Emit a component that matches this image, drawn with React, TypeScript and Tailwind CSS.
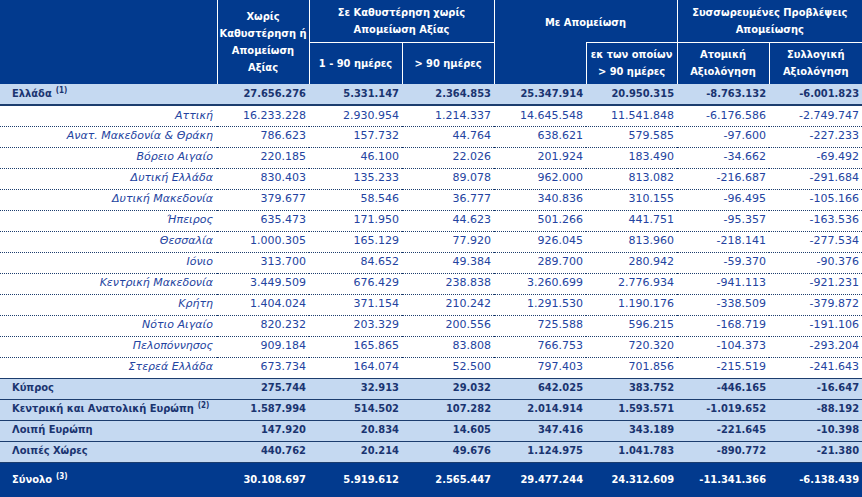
import React from 'react';

type Row = { label: string; sup?: string; values: string[]; kind: 'main' | 'region' };

const rows: Row[] = [
  { label: 'Ελλάδα', sup: '(1)', kind: 'main', values: ['27.656.276', '5.331.147', '2.364.853', '25.347.914', '20.950.315', '-8.763.132', '-6.001.823'] },
  { label: 'Αττική', kind: 'region', values: ['16.233.228', '2.930.954', '1.214.337', '14.645.548', '11.541.848', '-6.176.586', '-2.749.747'] },
  { label: 'Ανατ. Μακεδονία & Θράκη', kind: 'region', values: ['786.623', '157.732', '44.764', '638.621', '579.585', '-97.600', '-227.233'] },
  { label: 'Βόρειο Αιγαίο', kind: 'region', values: ['220.185', '46.100', '22.026', '201.924', '183.490', '-34.662', '-69.492'] },
  { label: 'Δυτική Ελλάδα', kind: 'region', values: ['830.403', '135.233', '89.078', '962.000', '813.082', '-216.687', '-291.684'] },
  { label: 'Δυτική Μακεδονία', kind: 'region', values: ['379.677', '58.546', '36.777', '340.836', '310.155', '-96.495', '-105.166'] },
  { label: 'Ήπειρος', kind: 'region', values: ['635.473', '171.950', '44.623', '501.266', '441.751', '-95.357', '-163.536'] },
  { label: 'Θεσσαλία', kind: 'region', values: ['1.000.305', '165.129', '77.920', '926.045', '813.960', '-218.141', '-277.534'] },
  { label: 'Ιόνιο', kind: 'region', values: ['313.700', '84.652', '49.384', '289.700', '280.942', '-59.370', '-90.376'] },
  { label: 'Κεντρική Μακεδονία', kind: 'region', values: ['3.449.509', '676.429', '238.838', '3.260.699', '2.776.934', '-941.113', '-921.231'] },
  { label: 'Κρήτη', kind: 'region', values: ['1.404.024', '371.154', '210.242', '1.291.530', '1.190.176', '-338.509', '-379.872'] },
  { label: 'Νότιο Αιγαίο', kind: 'region', values: ['820.232', '203.329', '200.556', '725.588', '596.215', '-168.719', '-191.106'] },
  { label: 'Πελοπόννησος', kind: 'region', values: ['909.184', '165.865', '83.808', '766.753', '720.320', '-104.373', '-293.204'] },
  { label: 'Στερεά Ελλάδα', kind: 'region', values: ['673.734', '164.074', '52.500', '797.403', '701.856', '-215.519', '-241.643'] },
  { label: 'Κύπρος', kind: 'main', values: ['275.744', '32.913', '29.032', '642.025', '383.752', '-446.165', '-16.647'] },
  { label: 'Κεντρική και Ανατολική Ευρώπη', sup: '(2)', kind: 'main', values: ['1.587.994', '514.502', '107.282', '2.014.914', '1.593.571', '-1.019.652', '-88.192'] },
  { label: 'Λοιπή Ευρώπη', kind: 'main', values: ['147.920', '20.834', '14.605', '347.416', '343.189', '-221.645', '-10.398'] },
  { label: 'Λοιπές Χώρες', kind: 'main', values: ['440.762', '20.214', '49.676', '1.124.975', '1.041.783', '-890.772', '-21.380'] },
];

const total = ['30.108.697', '5.919.612', '2.565.447', '29.477.244', '24.312.609', '-11.341.366', '-6.138.439'];

function Sup({ children }: { children: React.ReactNode }) {
  return <sup className="ml-1 text-[8px]">{children}</sup>;
}

export default function App() {
  return (
    <div className="h-[497px] w-[862px] overflow-hidden bg-white font-['DejaVu_Sans',sans-serif] text-[11px]">
      <table className="w-[862px] table-fixed border-collapse">
        <colgroup>
          <col className="w-[217px]" />
          <col className="w-[92px]" />
          <col className="w-[93px]" />
          <col className="w-[92px]" />
          <col className="w-[92px]" />
          <col className="w-[91px]" />
          <col className="w-[92px]" />
          <col className="w-[93px]" />
        </colgroup>
        <thead className="bg-[#023a8e] font-['DejaVu_Sans_Condensed',sans-serif] leading-[17px] text-white">
          <tr className="h-[42px]">
            <th rowSpan={2} className="border-r border-white" />
            <th rowSpan={2} className="border-x border-white px-0 font-bold">
              Χωρίς
              <br />
              Καθυστέρηση ή
              <br />
              Απομείωση
              <br />
              Αξίας
            </th>
            <th colSpan={2} className="border-x border-b border-white px-1 font-bold">
              Σε Καθυστέρηση χωρίς Απομείωση Αξίας
            </th>
            <th colSpan={2} className="border-x border-white px-1 pt-[14px] align-top font-bold">
              Με Απομείωση
            </th>
            <th colSpan={2} className="border-b border-l border-white px-1 font-bold">
              Συσσωρευμένες Προβλέψεις Απομείωσης
            </th>
          </tr>
          <tr className="h-[42px]">
            <th className="border-x border-white px-1 font-bold">1 - 90 ημέρες</th>
            <th className="border-x border-white px-1 font-bold">&gt; 90 ημέρες</th>
            <th className="border-l border-white" />
            <th className="border-x border-t border-white px-1 font-bold">
              εκ των οποίων
              <br />
              &gt; 90 ημέρες
            </th>
            <th className="border-x border-white px-1 font-bold">
              Ατομική
              <br />
              Αξιολόγηση
            </th>
            <th className="border-l border-white px-1 font-bold">
              Συλλογική
              <br />
              Αξιολόγηση
            </th>
          </tr>
        </thead>
        <tbody>
          {rows.map((r, i) => {
            const main = r.kind === 'main';
            const border =
              i === 0
                ? 'border-b-2 border-[#1c3d6e]'
                : main || i === 13
                  ? 'border-b border-[#1c3d6e]'
                  : 'border-b border-dotted border-[#1c3d6e]';
            return (
              <tr
                key={r.label}
                className={`h-[21px] ${border} ${main ? "bg-[#c5d9f1] font-['DejaVu_Sans_Condensed',sans-serif] font-bold text-[#1a3470]" : 'bg-white text-[#2343a0]'}`}
              >
                <td className={main ? 'pl-3 text-left' : 'pr-1 text-right italic'}>
                  {r.label}
                  {r.sup && <Sup>{r.sup}</Sup>}
                </td>
                {r.values.map((v, j) => (
                  <td key={j} className="pr-[3px] text-right">
                    {v}
                  </td>
                ))}
              </tr>
            );
          })}
          <tr className="h-[35px] bg-[#023a8e] font-['DejaVu_Sans_Condensed',sans-serif] font-bold text-white">
            <td className="pl-3 text-left">
              Σύνολο<Sup>(3)</Sup>
            </td>
            {total.map((v, j) => (
              <td key={j} className="pr-[3px] text-right">
                {v}
              </td>
            ))}
          </tr>
        </tbody>
      </table>
    </div>
  );
}
